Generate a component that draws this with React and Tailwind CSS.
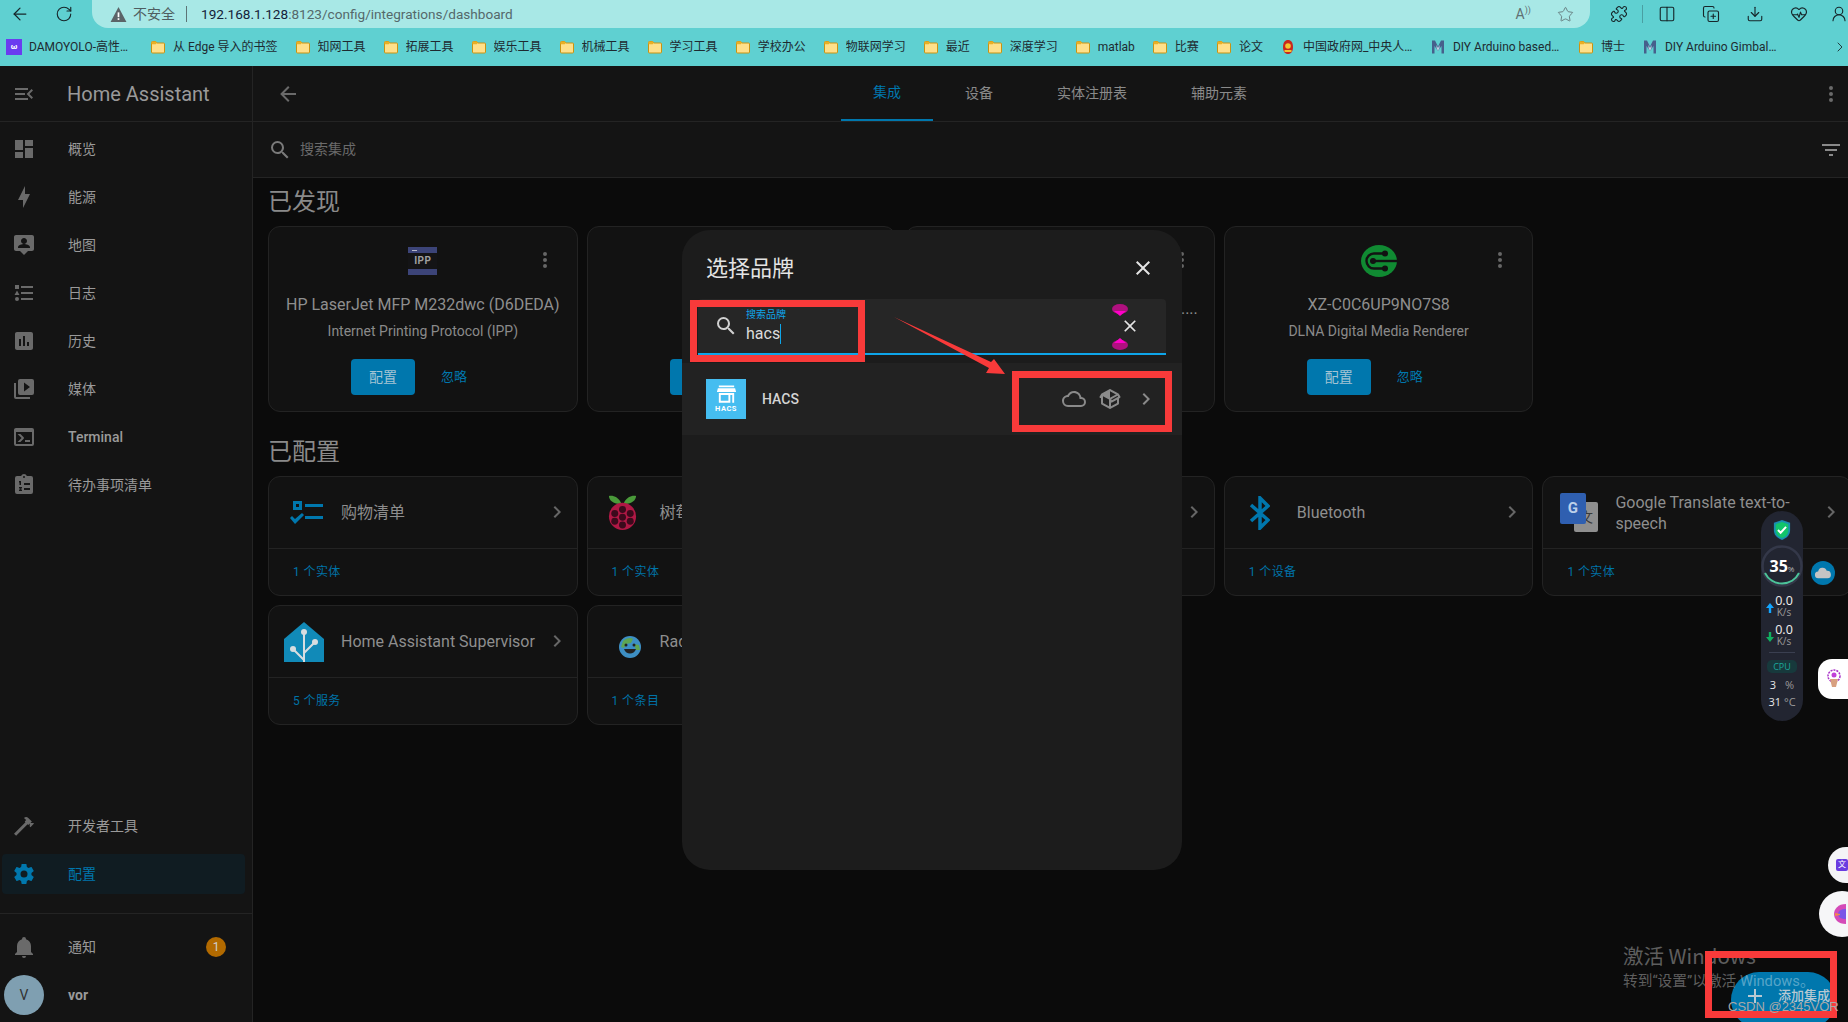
import React from "react";
import { ArrowLeft, RotateCw, Star, Puzzle, Columns2, Download, CopyPlus, HeartPulse, ChevronRight, UserRound } from "lucide-react";

const P = {
  dash: "M13,3V9H21V3M13,21H21V11H13M3,21H11V15H3M3,13H11V3H3V13Z",
  bolt: "M11 15H6L13 1V9H18L11 23V15Z",
  map: "M20 2H4C2.9 2 2 2.9 2 4V16C2 17.1 2.9 18 4 18H8L12 22L16 18H20C21.1 18 22 17.1 22 16V4C22 2.9 21.1 2 20 2M12 5C13.66 5 15 6.34 15 8S13.66 11 12 11 9 9.66 9 8 10.34 5 12 5M18 15H6V14C6 12 10 10.9 12 10.9S18 12 18 14V15Z",
  log: "M5,9.5L7.5,14H2.5L5,9.5M3,4H7V8H3V4M5,20A2,2 0 0,0 7,18A2,2 0 0,0 5,16A2,2 0 0,0 3,18A2,2 0 0,0 5,20M9,5V7H21V5H9M9,19H21V17H9V19M9,13H21V11H9V13Z",
  chart: "M19 3H5C3.9 3 3 3.9 3 5V19C3 20.1 3.9 21 5 21H19C20.1 21 21 20.1 21 19V5C21 3.9 20.1 3 19 3M9 17H7V10H9V17M13 17H11V7H13V17M17 17H15V13H17V17Z",
  media: "M4,6H2V20A2,2 0 0,0 4,22H18V20H4V6M20,2H8A2,2 0 0,0 6,4V16A2,2 0 0,0 8,18H20A2,2 0 0,0 22,16V4A2,2 0 0,0 20,2M12,14.5V5.5L18,10L12,14.5Z",
  term: "M20,19V7H4V19H20M20,3A2,2 0 0,1 22,5V19A2,2 0 0,1 20,21H4A2,2 0 0,1 2,19V5C2,3.89 2.9,3 4,3H20M13,17V15H18V17H13M9.58,13L5.57,9H8.4L11.7,12.3C12.09,12.69 12.09,13.33 11.7,13.72L8.42,17H5.59L9.58,13Z",
  todo: "M19,3H14.82C14.4,1.84 13.3,1 12,1C10.7,1 9.6,1.84 9.18,3H5A2,2 0 0,0 3,5V19A2,2 0 0,0 5,21H19A2,2 0 0,0 21,19V5A2,2 0 0,0 19,3M12,3A1,1 0 0,1 13,4A1,1 0 0,1 12,5A1,1 0 0,1 11,4A1,1 0 0,1 12,3M7,8H9V12H7.5V9.5H7V8M7,14H10V15L8.5,16.5H10V18H7V17L8.5,15.5H7V14M12,10H18V12H12V10M12,15H18V17H12V15Z",
  hammer: "M2 19.63L13.43 8.2L12.72 7.5L14.14 6.07L12 3.89C13.2 2.7 15.09 2.7 16.27 3.89L19.87 7.5L18.45 8.91H21.29L22 9.62L18.45 13.21L17.74 12.5V9.62L16.27 11.04L15.56 10.33L4.13 21.76L2 19.63Z",
  cog: "M12,15.5A3.5,3.5 0 0,1 8.5,12A3.5,3.5 0 0,1 12,8.5A3.5,3.5 0 0,1 15.5,12A3.5,3.5 0 0,1 12,15.5M19.43,12.97C19.47,12.65 19.5,12.33 19.5,12C19.5,11.67 19.47,11.34 19.43,11L21.54,9.37C21.73,9.22 21.78,8.95 21.66,8.73L19.66,5.27C19.54,5.05 19.27,4.96 19.05,5.05L16.56,6.05C16.04,5.66 15.5,5.32 14.87,5.07L14.5,2.42C14.46,2.18 14.25,2 14,2H10C9.75,2 9.54,2.18 9.5,2.42L9.13,5.07C8.5,5.32 7.96,5.66 7.44,6.05L4.95,5.05C4.73,4.96 4.46,5.05 4.34,5.27L2.34,8.73C2.21,8.95 2.27,9.22 2.46,9.37L4.57,11C4.53,11.34 4.5,11.67 4.5,12C4.5,12.33 4.53,12.65 4.57,12.97L2.46,14.63C2.27,14.78 2.21,15.05 2.34,15.27L4.34,18.73C4.46,18.95 4.73,19.03 4.95,18.95L7.44,17.94C7.96,18.34 8.5,18.68 9.13,18.93L9.5,21.58C9.54,21.82 9.75,22 10,22H14C14.25,22 14.46,21.82 14.5,21.58L14.87,18.93C15.5,18.67 16.04,18.34 16.56,17.94L19.05,18.95C19.27,19.03 19.54,18.95 19.66,18.73L21.66,15.27C21.78,15.05 21.73,14.78 21.54,14.63L19.43,12.97Z",
  bell: "M21,19V20H3V19L5,17V11C5,7.9 7.03,5.17 10,4.29C10,4.19 10,4.1 10,4A2,2 0 0,1 12,2A2,2 0 0,1 14,4C14,4.1 14,4.19 14,4.29C16.97,5.17 19,7.9 19,11V17L21,19M14,21A2,2 0 0,1 12,23A2,2 0 0,1 10,21",
  menu: "M21,15.61L19.59,17L14.58,12L19.59,7L21,8.39L17.44,12L21,15.61M3,6H16V8H3V6M3,13V11H13V13H3M3,18V16H16V18H3Z",
  back: "M20,11V13H8L13.5,18.5L12.08,19.92L4.16,12L12.08,4.08L13.5,5.5L8,11H20Z",
  dots: "M12,16A2,2 0 0,1 14,18A2,2 0 0,1 12,20A2,2 0 0,1 10,18A2,2 0 0,1 12,16M12,10A2,2 0 0,1 14,12A2,2 0 0,1 12,14A2,2 0 0,1 10,12A2,2 0 0,1 12,10M12,4A2,2 0 0,1 14,6A2,2 0 0,1 12,8A2,2 0 0,1 10,6A2,2 0 0,1 12,4Z",
  search: "M9.5,3A6.5,6.5 0 0,1 16,9.5C16,11.11 15.41,12.59 14.44,13.73L14.71,14H15.5L20.5,19L19,20.5L14,15.5V14.71L13.73,14.44C12.59,15.41 11.11,16 9.5,16A6.5,6.5 0 0,1 3,9.5A6.5,6.5 0 0,1 9.5,3M9.5,5C7,5 5,7 5,9.5C5,12 7,14 9.5,14C12,14 14,12 14,9.5C14,7 12,5 9.5,5Z",
  filter: "M6,13H18V11H6M3,6V8H21V6M10,18H14V16H10V18Z",
  close: "M19,6.41L17.59,5L12,10.59L6.41,5L5,6.41L10.59,12L5,17.59L6.41,19L12,13.41L17.59,19L19,17.59L13.41,12L19,6.41Z",
  chev: "M8.59,16.58L13.17,12L8.59,7.41L10,6L16,12L10,18L8.59,16.58Z",
  cloud: "M19,18H6A4,4 0 0,1 2,14A4,4 0 0,1 6,10H6.71C7.37,7.69 9.5,6 12,6A5.5,5.5 0 0,1 17.5,11.5V12H19A3,3 0 0,1 22,15A3,3 0 0,1 19,18M19.35,10.03C18.67,6.59 15.64,4 12,4C9.11,4 6.6,5.64 5.35,8.03C2.34,8.36 0,10.9 0,14A6,6 0 0,0 6,20H19A5,5 0 0,0 24,15C24,12.36 21.95,10.22 19.35,10.03Z",
  pkg: "M2,10.96C1.5,10.68 1.35,10.07 1.63,9.59L3.13,7C3.24,6.8 3.41,6.66 3.6,6.58L11.43,2.18C11.59,2.06 11.79,2 12,2C12.21,2 12.41,2.06 12.57,2.18L20.47,6.62C20.66,6.72 20.82,6.88 20.91,7.08L22.36,9.6C22.64,10.08 22.47,10.69 22,10.96L21,11.54V16.5C21,16.88 20.79,17.21 20.47,17.38L12.57,21.82C12.41,21.94 12.21,22 12,22C11.79,22 11.59,21.94 11.43,21.82L3.53,17.38C3.21,17.21 3,16.88 3,16.5V10.96C2.7,11.13 2.32,11.14 2,10.96M12,4.15V4.15L12,10.85V10.85L17.96,7.5L12,4.15M5,15.91L11,19.29V12.58L5,9.21V15.91M19,15.91V12.69L14,15.59C13.67,15.77 13.28,15.76 13,15.6V19.29L19,15.91M13.85,13.36L20.13,9.73L19.55,8.72L13.27,12.35L13.85,13.36Z",
  plus: "M19,13H13V19H11V13H5V11H11V5H13V11H19V13Z",
};

function I({ d, size = 24, className = "" }) {
  return (
    <svg viewBox="0 0 24 24" width={size} height={size} fill="currentColor" className={"shrink-0 " + className}>
      <path d={d} />
    </svg>
  );
}

function Folder() {
  return (
    <svg viewBox="0 0 16 16" width="16" height="16" className="shrink-0">
      <path d="M1.5 3.5a1 1 0 0 1 1-1h3.2l1.3 1.5h6.5a1 1 0 0 1 1 1v8a1 1 0 0 1-1 1h-11a1 1 0 0 1-1-1z" fill="#ffe08a" stroke="#c99312" strokeWidth="1" />
      <path d="M1.5 3.5a1 1 0 0 1 1-1h3.2l1.3 1.5-1.3 1.2H1.5z" fill="#e9b026" />
    </svg>
  );
}

function Damo() {
  return (
    <div className="w-4 h-4 bg-[#6a3cf0] flex items-center justify-center text-white text-[8px] leading-none shrink-0 font-bold">ω</div>
  );
}

function Emblem() {
  return (
    <svg viewBox="0 0 16 16" width="16" height="16" className="shrink-0">
      <path d="M8 1c3 0 5 2.500 5 7s-2 7-5 7-5-2.500-5-7 2-7 5-7z" fill="#c8281e" />
      <circle cx="8" cy="7" r="2.800" fill="#f4c430" />
      <rect x="4.500" y="11" width="7" height="2" fill="#f4c430" />
    </svg>
  );
}

function MIcon() {
  return (
    <svg viewBox="0 0 16 16" width="16" height="16" className="shrink-0">
      <path d="M2 1.500h3l3 6 3-6h3v13h-2.500V7L8 12 4.500 7v7.500H2z" fill="#46608c" />
      <path d="M6.500 6l1.500 3 1.500-3v3L8 12 6.500 9z" fill="#bcd4e6" />
    </svg>
  );
}

function BM({ icon, w, children }) {
  return (
    <div className="flex items-center gap-[7px] shrink-0">
      {icon}
      <span className={"truncate text-[12px] leading-4 text-[#1e2a30] " + (w || "")}>{children}</span>
    </div>
  );
}

function Chrome() {
  return (
    <div className="h-[66px] shrink-0 bg-[#5fd0d1] flex flex-col">
      <div className="h-[28px] flex items-center shrink-0">
        <ArrowLeft size={20} strokeWidth={1.5} className="ml-[10px] text-[#17262a]" />
        <RotateCw size={18} strokeWidth={1.5} className="ml-[25px] text-[#17262a]" />
        <div className="ml-[19px] w-[1498px] h-full bg-[#a8e8e6] rounded-bl-[16px] rounded-br-[16px] flex items-center pl-[18px]">
          <svg viewBox="0 0 16 16" width="17" height="17" className="shrink-0">
            <path d="M8 1L15.500 15H.5z" fill="#5b6468" />
            <rect x="7.200" y="6" width="1.600" height="4.500" fill="#fff" />
            <rect x="7.200" y="11.500" width="1.600" height="1.600" fill="#fff" />
          </svg>
          <span className="ml-[6px] text-[14px] text-[#4f5d60]">不安全</span>
          <div className="ml-[11px] w-px h-[16px] bg-[#5d7476]" />
          <span className="ml-[14px] text-[13.6px] text-[#14223a]">192.168.1.128</span>
          <span className="text-[13.6px] text-[#55686b]">:8123/config/integrations/dashboard</span>
          <div className="ml-auto flex items-center text-[#5f7073]">
            <span className="text-[14px] leading-none">A</span>
            <span className="text-[9px] leading-none mb-[8px]">))</span>
            <Star size={17} strokeWidth={1.2} className="ml-[26px] mr-[16px]" />
          </div>
        </div>
        <Puzzle size={18} strokeWidth={1.5} className="ml-[20px] text-[#17262a]" />
        <div className="ml-[14px] w-px h-[18px] bg-[#4a9fa2]" />
        <Columns2 size={18} strokeWidth={1.5} className="ml-[15px] text-[#17262a]" />
        <CopyPlus size={18} strokeWidth={1.5} className="ml-[26px] text-[#17262a]" />
        <Download size={18} strokeWidth={1.5} className="ml-[26px] text-[#17262a]" />
        <HeartPulse size={18} strokeWidth={1.5} className="ml-[26px] text-[#17262a]" />
        <UserRound size={18} strokeWidth={1.5} className="ml-[22px] text-[#17262a]" />
      </div>
      <div className="h-[38px] flex items-center pl-[6px] gap-[17px] relative">
        <BM icon={<Damo />} w="w-[104px]">DAMOYOLO-高性能检测</BM>
        <BM icon={<Folder />}>从 Edge 导入的书签</BM>
        <BM icon={<Folder />}>知网工具</BM>
        <BM icon={<Folder />}>拓展工具</BM>
        <BM icon={<Folder />}>娱乐工具</BM>
        <BM icon={<Folder />}>机械工具</BM>
        <BM icon={<Folder />}>学习工具</BM>
        <BM icon={<Folder />}>学校办公</BM>
        <BM icon={<Folder />}>物联网学习</BM>
        <BM icon={<Folder />}>最近</BM>
        <BM icon={<Folder />}>深度学习</BM>
        <BM icon={<Folder />}>matlab</BM>
        <BM icon={<Folder />}>比赛</BM>
        <BM icon={<Folder />}>论文</BM>
        <BM icon={<Emblem />} w="w-[110px]">中国政府网_中央人民政府门户网站</BM>
        <BM icon={<MIcon />} w="w-[108px]">DIY Arduino based Gimbal</BM>
        <BM icon={<Folder />}>博士</BM>
        <BM icon={<MIcon />} w="w-[114px]">DIY Arduino Gimbal Stabilizer</BM>
        <ChevronRight size={16} strokeWidth={1.3} className="absolute right-0 text-[#17262a]" />
      </div>
    </div>
  );
}

function NavItem({ d, label, bold }) {
  return (
    <div className="h-12 flex items-center pl-3 shrink-0">
      <I d={d} className="text-[#6a6a6a]" />
      <span className={"ml-8 text-[14px] text-[#9a9a9a] " + (bold ? "font-medium" : "")}>{label}</span>
    </div>
  );
}

function Sidebar() {
  return (
    <div className="w-[253px] shrink-0 bg-[#141414] border-r border-[#242424] flex flex-col">
      <div className="h-[56px] shrink-0 flex items-center pl-3 border-b border-[#242424]">
        <I d={P.menu} className="text-[#6a6a6a]" />
        <span className="ml-[31px] text-[20px] text-[#9a9a9a]">Home Assistant</span>
      </div>
      <div className="pt-[3px] flex flex-col">
        <NavItem d={P.dash} label="概览" />
        <NavItem d={P.bolt} label="能源" />
        <NavItem d={P.map} label="地图" />
        <NavItem d={P.log} label="日志" />
        <NavItem d={P.chart} label="历史" />
        <NavItem d={P.media} label="媒体" />
        <NavItem d={P.term} label="Terminal" bold />
        <NavItem d={P.todo} label="待办事项清单" />
      </div>
      <div className="flex-1" />
      <NavItem d={P.hammer} label="开发者工具" />
      <div className="h-12 shrink-0 flex items-center pl-[2px]">
        <div className="w-[243px] h-10 rounded-[4px] bg-[#101c22] flex items-center pl-[10px]">
          <I d={P.cog} className="text-[#0077ad]" />
          <span className="ml-8 text-[14px] text-[#0077ad]">配置</span>
        </div>
      </div>
      <div className="mt-[15px] border-t border-[#242424] pt-[9px] pb-[3px] flex flex-col">
        <div className="h-12 flex items-center pl-3">
          <I d={P.bell} className="text-[#6a6a6a]" />
          <span className="ml-8 text-[14px] text-[#9a9a9a]">通知</span>
          <div className="ml-[110px] w-5 h-5 rounded-full bg-[#b26a00] flex items-center justify-center text-[12px] text-[#cfcfcf]">1</div>
        </div>
        <div className="h-12 flex items-center pl-1">
          <div className="w-10 h-10 rounded-full bg-[#7f9fb1] flex items-center justify-center text-[14px] text-[#333]">V</div>
          <span className="ml-6 text-[14px] font-bold text-[#9a9a9a]">vor</span>
        </div>
      </div>
    </div>
  );
}

function Kebab() {
  return <I d={P.dots} size={24} className="absolute right-[20px] top-[21px] text-[#666]" />;
}

function Discovered({ icon, name, sub }) {
  return (
    <div className="relative h-[186px] rounded-[12px] border border-[#232323] bg-[#121212] flex flex-col items-center overflow-hidden">
      <Kebab />
      <div className="mt-[16px] h-9 flex items-center justify-center">{icon}</div>
      <div className="mt-[14px] h-6 leading-6 text-[16px] text-[#8e8e8e] whitespace-nowrap">{name}</div>
      <div className="mt-1 h-5 leading-5 text-[14px] text-[#8a8a8a] whitespace-nowrap">{sub}</div>
      <div className="mt-[18px] self-start pl-[82px] flex items-center">
        <div className="w-16 h-9 rounded-[4px] bg-[#0077ad] flex items-center justify-center text-[14px] text-[#a3c4d4]">配置</div>
        <span className="ml-[26px] text-[13px] text-[#0077ad]">忽略</span>
      </div>
    </div>
  );
}

function Configured({ icon, name, foot }) {
  return (
    <div className="h-[120px] rounded-[12px] border border-[#232323] bg-[#121212] flex flex-col overflow-hidden">
      <div className="h-[72px] shrink-0 border-b border-[#232323] flex items-center relative pr-[30px]">
        <div className="w-[72px] shrink-0 flex items-center justify-center">{icon}</div>
        <span className="text-[16px] leading-[21px] text-[#8e8e8e]">{name}</span>
        <I d={P.chev} size={24} className="absolute right-[8px] top-[23px] text-[#666]" />
      </div>
      <div className="flex-1 flex items-center pl-[24px] text-[12px] tracking-[0.4px] text-[#0073a8]">{foot}</div>
    </div>
  );
}

const IppIcon = (
  <div className="w-[29px] h-[28px] bg-[#141416] flex flex-col">
    <div className="h-[6px] bg-[#3c4478] flex items-center pl-1"><div className="w-[5px] h-[1px] bg-[#b8b8c8]" /></div>
    <div className="flex-1 flex items-center justify-center text-[10px] font-bold leading-none text-[#a0a0a0] tracking-[0.5px]">IPP</div>
    <div className="h-[6px] bg-[#3c4478]" />
  </div>
);

const DlnaIcon = (
  <svg viewBox="0 0 36 32" width="36" height="32">
    <ellipse cx="18" cy="16" rx="18" ry="16" fill="#108a32" />
    <path d="M24 8.500H13a7.500 7.500 0 0 0 0 15h11" fill="none" stroke="#121212" strokeWidth="2.400" />
    <path d="M13 16h23" stroke="#121212" strokeWidth="2.400" />
    <circle cx="24" cy="8.500" r="3" fill="#121212" />
    <circle cx="24" cy="23.500" r="3" fill="#121212" />
    <circle cx="12" cy="16" r="3" fill="#121212" />
  </svg>
);

const ListIcon = (
  <svg viewBox="0 0 33 24" width="33" height="24" className="ml-[2px]">
    <path d="M3 0h9v9H3zM6 3v3h3V3z" fill="#0077ad" fillRule="evenodd" />
    <path d="M15 3h18v3H15zM15 15h18v3H15z" fill="#0077ad" />
    <path d="M0 17l2-2 3 3 7-6 2 2-9 9z" fill="#0077ad" />
  </svg>
);

const RaspIcon = (
  <svg viewBox="0 0 32 40" width="31" height="39" className="-ml-[2px]">
    <path d="M15 11C12 4 6 2 2 3c0 5 6 9 13 8zM17 11c3-7 9-9 13-8 0 5-6 9-13 8z" fill="#4a9a3a" />
    <circle cx="16" cy="24" r="14" fill="#b01845" />
    <circle cx="16" cy="17" r="3.600" fill="#3b0a1c" />
    <circle cx="8" cy="21" r="3.600" fill="#3b0a1c" />
    <circle cx="24" cy="21" r="3.600" fill="#3b0a1c" />
    <circle cx="16" cy="25" r="3.600" fill="#3b0a1c" />
    <circle cx="8" cy="29" r="3.600" fill="#3b0a1c" />
    <circle cx="24" cy="29" r="3.600" fill="#3b0a1c" />
    <circle cx="16" cy="33" r="3.600" fill="#3b0a1c" />
  </svg>
);

const HaIcon = (
  <svg viewBox="0 0 40 40" width="40" height="40" className="-ml-[2px]">
    <path d="M20 0L40 17V40H0V17z" fill="#118ab8" />
    <g stroke="#d7dde0" strokeWidth="2" fill="none">
      <path d="M20 10V40M9 27l11 11M31 20L20 31" />
    </g>
    <circle cx="20" cy="10" r="3" fill="#d7dde0" />
    <circle cx="9" cy="27" r="3" fill="#d7dde0" />
    <circle cx="31" cy="20" r="3" fill="#d7dde0" />
  </svg>
);

const EarthIcon = (
  <svg viewBox="0 0 24 24" width="24" height="24" className="ml-[12px] mt-[10px]">
    <circle cx="12" cy="12" r="11" fill="#3d8fc4" />
    <path d="M5 6c3-3 8-4 10-2l-2 4-5 1-2 4-3-1zM16 9l5 1 1 5-4 0z" fill="#5ea552" />
    <path d="M6 14c2 6 10 6 12 0z" fill="#222" />
    <circle cx="8" cy="10" r="1.500" fill="#222" />
    <circle cx="16" cy="10" r="1.500" fill="#222" />
  </svg>
);

const BtIcon = (
  <svg viewBox="0 0 21 34" width="21" height="34" className="-ml-[2px]">
    <path d="M2 9l17 15-8 8V2l8 8L2 25" fill="none" stroke="#0077ad" strokeWidth="3.500" />
  </svg>
);

const GoogleIcon = (
  <div className="relative w-[38px] h-[39px] -ml-[1px]">
    <div className="absolute right-0 top-[9px] w-[24px] h-[30px] rounded-[2px] bg-[#8f8f8f] flex items-center justify-center text-[14px] text-[#3a3a3a]">文</div>
    <div className="absolute left-0 top-0 w-[26px] h-[31px] rounded-[2px] bg-[#2f5fb0] flex items-center justify-center text-[15px] font-bold text-[#bcd0ea]">G</div>
  </div>
);

function Main() {
  const grid = "grid grid-cols-[repeat(5,309.6px)] gap-[9px]";
  const tab = "h-full px-8 flex items-center text-[14px] text-[#8a8a8a]";
  return (
    <div className="flex-1 min-w-0 flex flex-col bg-[#0b0b0b] overflow-hidden">
      <div className="h-[56px] shrink-0 bg-[#141414] border-b border-[#242424] flex items-center">
        <div className="w-[588px] pl-[23px] shrink-0">
          <I d={P.back} className="text-[#6a6a6a]" />
        </div>
        <div className="h-full flex">
          <div className="h-full px-8 flex items-center text-[14px] text-[#0077ad] border-b-2 border-[#0077ad]">集成</div>
          <div className={tab}>设备</div>
          <div className={tab}>实体注册表</div>
          <div className={tab}>辅助元素</div>
        </div>
        <div className="flex-1" />
        <I d={P.dots} className="mr-[5px] text-[#6a6a6a]" />
      </div>
      <div className="h-[56px] shrink-0 bg-[#141414] border-b border-[#242424] flex items-center pl-[15px] pr-[5px]">
        <I d={P.search} className="text-[#7a7a7a]" />
        <span className="ml-2 text-[14px] text-[#6a6a6a]">搜索集成</span>
        <div className="flex-1" />
        <I d={P.filter} className="text-[#8a8a8a]" />
      </div>
      <div className="pl-[15px]">
        <div className="h-12 flex items-center text-[24px] text-[#8a8a8a]">已发现</div>
        <div className={grid}>
          <Discovered icon={IppIcon} name="HP LaserJet MFP M232dwc (D6DEDA)" sub="Internet Printing Protocol (IPP)" />
          <Discovered icon={<div />} name="" sub="" />
          <div className="relative h-[186px] rounded-[12px] border border-[#232323] bg-[#121212] overflow-hidden">
            <Kebab />
            <div className="absolute right-[16px] top-[70px] h-6 leading-6 text-[16px] text-[#8e8e8e]">.....</div>
          </div>
          <Discovered icon={DlnaIcon} name="XZ-C0C6UP9NO7S8" sub="DLNA Digital Media Renderer" />
        </div>
        <div className="pt-4 h-16 flex items-center text-[24px] text-[#8a8a8a]">已配置</div>
        <div className={grid}>
          <Configured icon={ListIcon} name="购物清单" foot="1 个实体" />
          <Configured icon={RaspIcon} name="树莓派" foot="1 个实体" />
          <Configured icon={null} name="" foot="" />
          <Configured icon={BtIcon} name="Bluetooth" foot="1 个设备" />
          <Configured icon={GoogleIcon} name="Google Translate text-to-speech" foot="1 个实体" />
          <Configured icon={HaIcon} name="Home Assistant Supervisor" foot="5 个服务" />
          <Configured icon={EarthIcon} name="Radio Browser" foot="1 个条目" />
        </div>
      </div>
    </div>
  );
}

function Modal() {
  return (
    <div className="absolute left-[682px] top-[230px] w-[500px] h-[640px] rounded-[28px] bg-[#1c1c1c] flex flex-col overflow-hidden">
      <div className="h-[69px] shrink-0 flex items-center pl-6 pr-[27px] pt-[7px]">
        <span className="text-[22px] text-[#e4e4e4]">选择品牌</span>
        <div className="flex-1" />
        <I d={P.close} className="text-[#e4e4e4]" />
      </div>
      <div className="relative mx-4 h-14 shrink-0 bg-[#262626] rounded-t-[4px] border-b-2 border-[#0ea5e9] flex items-center pl-[16px] pr-[26px]">
        <I d={P.search} className="text-[#d0d0d0]" />
        <div className="ml-[8px] flex flex-col">
          <span className="text-[10px] leading-[12px] text-[#0ea5e9]">搜索品牌</span>
          <div className="flex items-center mt-[3px]">
            <span className="text-[16px] leading-[20px] text-[#dcdcdc]">hacs</span>
            <div className="w-px h-[20px] bg-[#0ea5e9]" />
          </div>
        </div>
        <div className="flex-1" />
        <I d={P.close} size={20} className="text-[#e4e4e4]" />
        <svg viewBox="0 0 18 12" width="18" height="12" className="absolute right-[37px] top-[5px]">
          <ellipse cx="9" cy="5" rx="8" ry="5" fill="#b0107f" />
          <path d="M3 7h12l-6 5z" fill="#ff00c8" />
        </svg>
        <svg viewBox="0 0 18 12" width="18" height="12" className="absolute right-[37px] bottom-[3px]">
          <ellipse cx="9" cy="7" rx="8" ry="5" fill="#b0107f" />
          <path d="M3 5h12L9 0z" fill="#ff00c8" />
        </svg>
      </div>
      <div className="mt-2 h-[72px] shrink-0 bg-[#222222] flex items-center pl-6 pr-[24px]">
        <div className="w-10 h-10 bg-[#45bdf0] flex flex-col items-center pt-[5px]">
          <svg viewBox="0 0 24 20" width="23" height="20">
            <path d="M4 1h16v2H4zM3 4h18l1 4H2z" fill="#fff" />
            <path d="M4 9h16v10H4zM6 11v6h8v-6zM16 11v8h2v-8z" fill="#fff" fillRule="evenodd" />
          </svg>
          <span className="text-[7.500px] leading-[10px] font-bold tracking-[0.5px] text-white">HACS</span>
        </div>
        <span className="ml-4 text-[14px] font-medium text-[#d4d4d4]">HACS</span>
        <div className="flex-1" />
        <I d={P.cloud} className="text-[#8a8a8a]" />
        <I d={P.pkg} className="ml-3 text-[#8a8a8a]" />
        <I d={P.chev} className="ml-[12px] text-[#8a8a8a]" />
      </div>
    </div>
  );
}

function Rate({ color, up }) {
  return (
    <div className="flex items-center w-full pl-[5px]">
      <svg viewBox="0 0 8 10" width="8" height="10" className="shrink-0 mt-[4px]">
        <path d={up ? "M4 0L8 5H5.200V10H2.800V5H0z" : "M4 10L8 5H5.200V0H2.800V5H0z"} fill={color} />
      </svg>
      <div className="w-5 flex flex-col items-center">
        <span className="text-[12.500px] leading-[12px] text-[#f0f0f0]">0.0</span>
        <span className="text-[10px] leading-[10px] text-[#9a9a9a]">K/s</span>
      </div>
    </div>
  );
}

function Widget() {
  return (
    <>
      <div className="absolute left-[1761px] top-[511px] w-[42px] h-[210px] rounded-[21px] bg-[#222531] flex flex-col items-center font-['Open_Sans',sans-serif]">
        <svg viewBox="0 0 20 24" width="18" height="22" className="mt-[8px] shrink-0">
          <path d="M10 1l9 3v8c0 6-4 9-9 11-5-2-9-5-9-11V4z" fill="#1a8fb0" />
          <path d="M10 3l7 2.500v6.500c0 5-3 7.500-7 9-4-1.500-7-4-7-9V5.500z" fill="#12c46a" />
          <path d="M5.500 12l3 3 6-6.500" stroke="#fff" strokeWidth="2.200" fill="none" />
        </svg>
        <div className="relative w-[42px] h-[42px] mt-1 shrink-0 flex items-center justify-center">
          <svg viewBox="0 0 42 42" width="42" height="42" className="absolute left-0 top-0">
            <circle cx="21" cy="21" r="19.500" fill="none" stroke="#343849" strokeWidth="2.500" />
            <path d="M4 28A19 19 0 0 0 38 28" fill="none" stroke="#4cc39a" strokeWidth="2" />
          </svg>
          <span className="relative text-[16px] font-bold leading-none text-white">35<span className="text-[8px] font-normal text-[#bbb]">%</span></span>
        </div>
        <div className="mt-2 w-full"><Rate color="#12a5ff" up /></div>
        <div className="mt-[7px] w-full"><Rate color="#10b060" /></div>
        <div className="mt-[6px] w-[26px] h-px shrink-0 bg-[#3a3f50]" />
        <div className="mt-[7px] w-[30px] h-[13px] shrink-0 rounded-[5px] bg-[#17393c] text-[#1aa89c] text-[9px] leading-[13px] text-center">CPU</div>
        <div className="mt-[5px] text-[11px] leading-[14px] text-[#e8e8e8] flex gap-[9px]"><span>3</span><span className="text-[#9a9a9a]">%</span></div>
        <div className="mt-[3px] text-[11px] leading-[14px] text-[#e8e8e8] flex gap-[3px]"><span>31</span><span className="text-[#9a9a9a]">°C</span></div>
      </div>
      <div className="absolute left-[1811px] top-[561px] w-6 h-6 rounded-full bg-[#0077ad] flex items-center justify-center">
        <svg viewBox="0 0 24 24" width="18" height="18"><path d="M6 19a4.500 4.500 0 0 1-.5-9A6 6 0 0 1 17 9a5 5 0 0 1 1 10z" fill="#c4c4c4" /></svg>
      </div>
      <div className="absolute left-[1818px] top-[659px] w-[40px] h-[40px] rounded-l-[14px] bg-white flex items-center pl-[8px]">
        <svg viewBox="0 0 16 22" width="16" height="22">
          <circle cx="8" cy="8" r="6" fill="none" stroke="#a832c8" strokeWidth="1.500" strokeDasharray="2 1" />
          <path d="M4 11h8l-2 8H6z" fill="#d8a080" />
          <circle cx="8" cy="7" r="2.500" fill="#c040d8" />
        </svg>
      </div>
      <div className="absolute left-[1828px] top-[847px] w-[36px] h-[36px] rounded-full bg-[#f4f4f6] flex items-center pl-[8px]">
        <div className="w-[12px] h-[12px] rounded-[2px] bg-[#6a3ce0] flex items-center justify-center text-white text-[8px] leading-none">文</div>
      </div>
      <div className="absolute left-[1819px] top-[891px] w-[46px] h-[46px] rounded-full bg-[#f6f6f8] flex items-center pl-[14px]">
        <svg viewBox="0 0 14 22" width="14" height="22">
          <path d="M13 1C5 1 1 6 1 11s4 10 12 10z" fill="#d44ab8" />
          <path d="M13 6C8 6 5 8 5 11s3 5 8 5z" fill="#7a55e8" />
          <path d="M2 10l5 1v1L2 13z" fill="#f0884a" />
        </svg>
      </div>
    </>
  );
}

function Annotations() {
  const box = "absolute border-[7px] border-[#f83a3a]";
  return (
    <>
      <div className="absolute left-[1731px] top-[972px] w-[105px] h-[56px] rounded-full bg-[#0077ad] flex items-center pl-[12px] pb-[8px]">
        <I d={P.plus} className="text-[#b8c9d2]" />
        <span className="ml-[11px] text-[13px] font-medium text-[#b8c9d2] whitespace-nowrap">添加集成</span>
      </div>
      <div className="absolute left-[1623px] top-[941px] text-[20.500px] leading-7 text-white/35 whitespace-nowrap font-['Noto_Sans_CJK_SC',sans-serif]">激活 Windows</div>
      <div className="absolute left-[1623px] top-[971px] text-[14.700px] leading-5 text-white/35 whitespace-nowrap font-[Roboto,'Noto_Sans_CJK_SC',sans-serif]">转到“设置”以激活 Windows。</div>
      <div className={box + " left-[690px] top-[300px] w-[175px] h-[62px]"} />
      <div className={box + " left-[1012px] top-[371px] w-[160px] h-[61px]"} />
      <div className={box + " left-[1705px] top-[951px] w-[132px] h-[67px]"} />
      <svg viewBox="0 0 1848 1022" width="1848" height="1022" className="absolute left-0 top-0 pointer-events-none">
        <path d="M894 317L991 362 994 359 1005 374 986 373 989 368z" fill="#f83a3a" />
      </svg>
      <div className="absolute left-[1728px] top-[997px] text-[13px] leading-5 text-[#a8a8a8] whitespace-nowrap font-['Liberation_Sans',sans-serif]">CSDN @2345VOR</div>
    </>
  );
}

export default function App() {
  return (
    <div className="relative w-[1848px] h-[1022px] overflow-hidden flex flex-col bg-[#0b0b0b] font-[Roboto,'Noto_Sans_CJK_SC',sans-serif]">
      <Chrome />
      <div className="flex-1 min-h-0 flex">
        <Sidebar />
        <Main />
      </div>
      <Modal />
      <Widget />
      <Annotations />
    </div>
  );
}
